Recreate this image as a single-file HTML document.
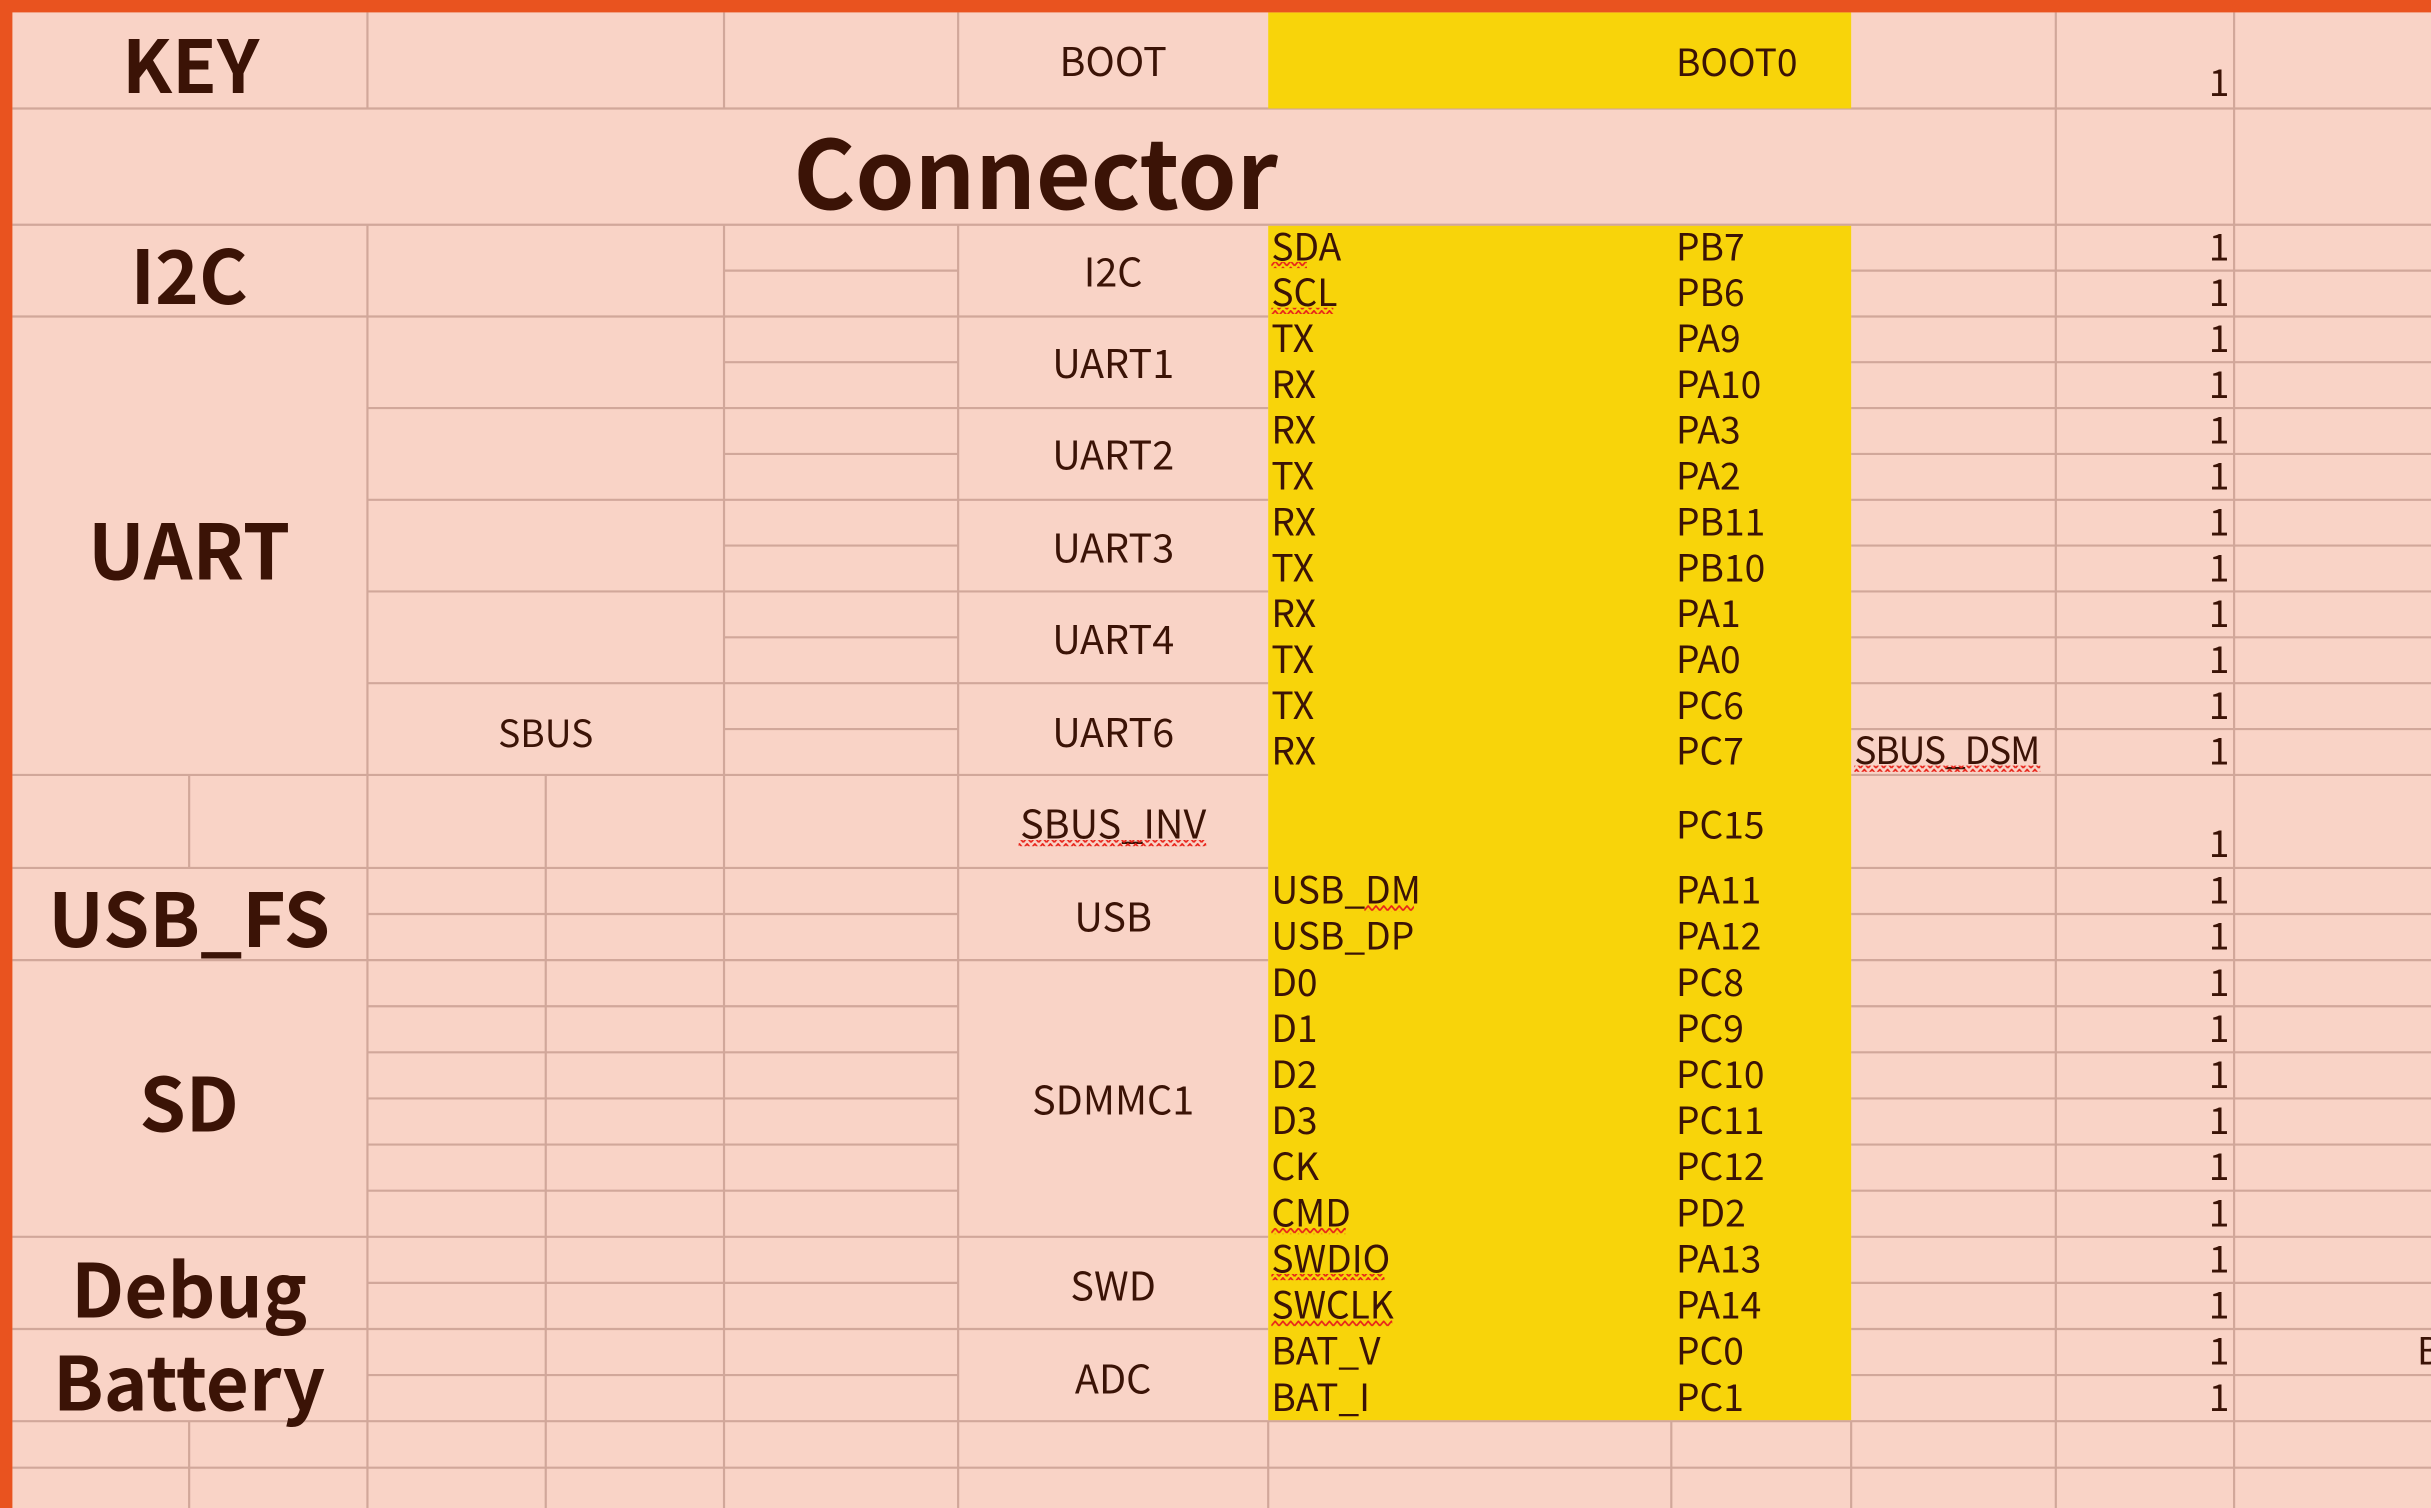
<!DOCTYPE html>
<html><head><meta charset="utf-8"><style>
html,body{margin:0;padding:0;background:#F9D3C6;overflow:hidden}
svg{display:block}
text{font-family:"Noto Sans CJK SC","Liberation Sans",sans-serif;fill:#3B1306}
.b{font-weight:700}
.l{font-size:24px}
.d{font-size:25.5px}
.c{text-anchor:middle}
.e{text-anchor:end}
</style></head><body>
<svg width="2431" height="1508" viewBox="0 0 1568 973" preserveAspectRatio="none" xmlns="http://www.w3.org/2000/svg">
<defs>
<pattern id="w" x="0" y="0" width="5" height="4" patternUnits="userSpaceOnUse">
<path d="M0 3.5L2.5 0.5 5 3.5" stroke="#E8231A" stroke-width="1.1" fill="none"/>
</pattern>
</defs>
<rect x="0" y="0" width="1568" height="973" fill="#F9D3C6"/>
<g stroke="#D1A79A" stroke-width="1.4" fill="none">
<path d="M8 70H1568M8 145H1568M8 500H818M1194 500H1568M8 560H818M1194 560H1568M8 917H1568M8 947H1568"/>
<path d="M8 204.2H818M1194 204.2H1568M8 619.5H818M1194 619.5H1568M8 798H818M1194 798H1568M8 857.5H818M1194 857.5H1568"/>
<path d="M237 263.3H818M1194 263.3H1568M237 322.5H818M1194 322.5H1568M237 381.6H818M1194 381.6H1568M237 440.8H818M1194 440.8H1568"/>
<path d="M467 174.6H618M1194 174.6H1568M467 233.7H618M1194 233.7H1568M467 292.9H618M1194 292.9H1568M467 352H618M1194 352H1568M467 411.2H618M1194 411.2H1568M467 470.4H618M1194 470.4H1568"/>
<path d="M237 589.75H618M1194 589.75H1568M237 649.25H618M1194 649.25H1568M237 679H618M1194 679H1568M237 708.75H618M1194 708.75H1568M237 738.5H618M1194 738.5H1568M237 768.25H618M1194 768.25H1568M237 827.75H618M1194 827.75H1568M237 887.25H618M1194 887.25H1568"/>
<path d="M122 500V560M122 917V973M237 8V70M237 145V973M352 500V973M467 8V70M467 145V973M618 8V70M618 145V973M818 917V973M1078 917V973M1194 917V973M1326 8V973M1441 8V973"/>
</g>
<rect x="818" y="8" width="376" height="62" fill="#F8D40A"/>
<rect x="818" y="145.7" width="376" height="770.6" fill="#F8D40A"/>
<rect x="0" y="0" width="1568" height="8" fill="#E9531F"/>
<rect x="0" y="0" width="8" height="973" fill="#E9531F"/>

<text class="b c" x="123" y="60" font-size="47">KEY</text>
<text class="b c" x="668" y="135" font-size="61">Connector</text>
<text class="b c" x="122" y="196" font-size="48">I2C</text>
<text class="b c" x="122" y="374" font-size="49">UART</text>
<text class="b c" x="122" y="611" font-size="48">USB_FS</text>
<text class="b c" x="122" y="730" font-size="48">SD</text>
<text class="b c" x="122" y="850" font-size="48">Debug</text>
<text class="b c" x="122" y="910" font-size="48">Battery</text>

<g class="d">
<text class="c" x="718" y="49">BOOT</text>
<text class="c" x="718" y="185">I2C</text>
<text class="c" x="718" y="244">UART1</text>
<text class="c" x="718" y="303">UART2</text>
<text class="c" x="718" y="363">UART3</text>
<text class="c" x="718" y="422">UART4</text>
<text class="c" x="718" y="482">UART6</text>
<text class="c" x="718" y="541">SBUS_INV</text>
<text class="c" x="718" y="601">USB</text>
<text class="c" x="718" y="719">SDMMC1</text>
<text class="c" x="718" y="839">SWD</text>
<text class="c" x="718" y="899">ADC</text>
</g>
<g class="l">
<text x="1081" y="49">BOOT0</text>
<text class="c" x="352" y="482">SBUS</text>
<text x="1081" y="541">PC15</text>
<text x="1196" y="493" textLength="120">SBUS_DSM</text>

<text x="820" y="168">SDA</text><text x="1081" y="168">PB7</text>
<text x="820" y="197.6">SCL</text><text x="1081" y="197.6">PB6</text>
<text x="820" y="227.2">TX</text><text x="1081" y="227.2">PA9</text>
<text x="820" y="256.7">RX</text><text x="1081" y="256.7">PA10</text>
<text x="820" y="286.3">RX</text><text x="1081" y="286.3">PA3</text>
<text x="820" y="315.9">TX</text><text x="1081" y="315.9">PA2</text>
<text x="820" y="345.5">RX</text><text x="1081" y="345.5">PB11</text>
<text x="820" y="375.1">TX</text><text x="1081" y="375.1">PB10</text>
<text x="820" y="404.6">RX</text><text x="1081" y="404.6">PA1</text>
<text x="820" y="434.2">TX</text><text x="1081" y="434.2">PA0</text>
<text x="820" y="463.8">TX</text><text x="1081" y="463.8">PC6</text>
<text x="820" y="493.4">RX</text><text x="1081" y="493.4">PC7</text>

<text x="820" y="583">USB_DM</text><text x="1081" y="583">PA11</text>
<text x="820" y="612.8">USB_DP</text><text x="1081" y="612.8">PA12</text>
<text x="820" y="642.5">D0</text><text x="1081" y="642.5">PC8</text>
<text x="820" y="672.3">D1</text><text x="1081" y="672.3">PC9</text>
<text x="820" y="702">D2</text><text x="1081" y="702">PC10</text>
<text x="820" y="731.8">D3</text><text x="1081" y="731.8">PC11</text>
<text x="820" y="761.5">CK</text><text x="1081" y="761.5">PC12</text>
<text x="820" y="791.3">CMD</text><text x="1081" y="791.3">PD2</text>
<text x="820" y="821">SWDIO</text><text x="1081" y="821">PA13</text>
<text x="820" y="850.8">SWCLK</text><text x="1081" y="850.8">PA14</text>
<text x="820" y="880.5">BAT_V</text><text x="1081" y="880.5">PC0</text>
<text x="820" y="910.3">BAT_I</text><text x="1081" y="910.3">PC1</text>

<g class="e">
<text x="1438" y="62">1</text>
<text x="1438" y="168">1</text><text x="1438" y="197.6">1</text><text x="1438" y="227.2">1</text><text x="1438" y="256.7">1</text>
<text x="1438" y="286.3">1</text><text x="1438" y="315.9">1</text><text x="1438" y="345.5">1</text><text x="1438" y="375.1">1</text>
<text x="1438" y="404.6">1</text><text x="1438" y="434.2">1</text><text x="1438" y="463.8">1</text><text x="1438" y="493.4">1</text>
<text x="1438" y="553">1</text>
<text x="1438" y="583">1</text><text x="1438" y="612.8">1</text><text x="1438" y="642.5">1</text><text x="1438" y="672.3">1</text>
<text x="1438" y="702">1</text><text x="1438" y="731.8">1</text><text x="1438" y="761.5">1</text><text x="1438" y="791.3">1</text>
<text x="1438" y="821">1</text><text x="1438" y="850.8">1</text><text x="1438" y="880.5">1</text><text x="1438" y="910.3">1</text>
</g>
<text x="1559" y="880.5">B</text>
</g>
<g fill="url(#w)">
<rect x="820" y="169" width="23" height="4"/>
<rect x="820" y="198.6" width="40" height="4"/>
<rect x="820" y="792.3" width="48" height="4"/>
<rect x="880" y="584" width="32" height="4"/>
<rect x="820" y="822" width="73" height="4"/>
<rect x="820" y="851.8" width="78" height="4"/>
<rect x="657" y="542" width="121" height="4"/>
<rect x="1196" y="494" width="120" height="4"/>
</g>
</svg>
</body></html>
